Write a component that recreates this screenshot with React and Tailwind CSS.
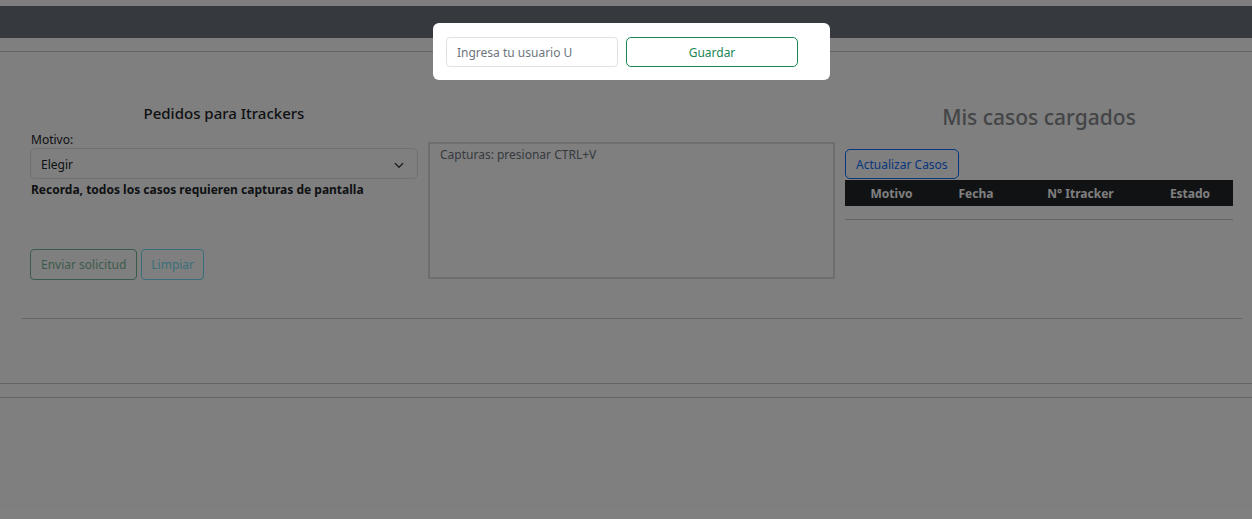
import React from "react";

function App() {
  return (
    <div
      className="relative min-h-[519px] bg-white text-[#212529] overflow-hidden"
      style={{ fontFamily: '"Noto Sans", "Open Sans", sans-serif' }}
    >
      {/* NAVBAR */}
      <div className="pt-[6px]">
        <nav className="h-[32px] bg-[#6c757d]" />
      </div>
      <div className="mt-[13px] border-t border-[#c9c9c9]" />

      {/* COLUMNS */}
      <div className="flex gap-[10px] pl-[30px]">
        {/* LEFT */}
        <div className="w-[388px] flex flex-col">
          <h2 className="mt-[49px] pt-[1px] text-center text-[15px] leading-[23px] font-medium">
            Pedidos para Itrackers
          </h2>
          <label className="mt-[5px] pt-[1px] ml-[1px] text-[12px] leading-[17px]">Motivo:</label>
          <div className="h-[31px] pt-[2px] border border-[#dee2e6] rounded-[5px] flex items-center justify-between pl-[10px] pr-[12px] text-[12px]">
            <span>Elegir</span>
            <svg width="12" height="12" viewBox="0 0 16 16" fill="none" stroke="#343a40" strokeWidth="1.6" strokeLinecap="round" strokeLinejoin="round">
              <path d="M3 6l5 5 5-5" />
            </svg>
          </div>
          <p className="mt-[2px] ml-[1px] text-[12px] leading-[17px] font-bold">
            Recorda, todos los casos requieren capturas de pantalla
          </p>
          <div className="mt-[51px] flex gap-[4px]">
            <button className="h-[31px] pt-[1px] px-[10px] border border-[#198754] rounded-[4px] text-[12px] text-[#198754] opacity-60">
              Enviar solicitud
            </button>
            <button className="h-[31px] pt-[1px] px-[9px] border border-[#0dcaf0] rounded-[4px] text-[12px] text-[#0dcaf0] opacity-60">
              Limpiar
            </button>
          </div>
        </div>

        {/* MIDDLE */}
        <div className="w-[407px]">
          <div className="mt-[90px] h-[137px] border-2 border-[#dcdcdc] px-[10px] py-[2px] text-[12px] text-[#6c757d]">
            Capturas: presionar CTRL+V
          </div>
        </div>

        {/* RIGHT */}
        <div className="w-[388px] flex flex-col">
          <h3 className="mt-[51px] text-center text-[21px] leading-[29px] font-medium text-[#888b8e]">
            Mis casos cargados
          </h3>
          <div className="mt-[17px]">
            <button className="h-[30px] pt-[2px] px-[10px] border border-[#0d6efd] rounded-[5px] text-[12px] text-[#0d6efd]">
              Actualizar Casos
            </button>
          </div>
          <div className="mt-[1px] h-[26px] pt-[2px] bg-[#212529] text-white text-[12px] font-bold flex items-center">
            <div className="w-[93px] text-center">Motivo</div>
            <div className="w-[76px] text-center">Fecha</div>
            <div className="w-[133px] text-center">N° Itracker</div>
            <div className="w-[86px] text-center">Estado</div>
          </div>
          <div className="h-[14px] border-b border-[#c9c9c9]" />
        </div>
      </div>

      {/* FOOTER LINES */}
      <div className="ml-[22px] mr-[10px] mt-[38px] border-t border-[#c9c9c9]" />
      <div className="mt-[64px] h-[15px] border-y border-[#c9c9c9]" />

      {/* BACKDROP */}
      <div className="absolute inset-0 bg-black/50" />

      {/* MODAL */}
      <div className="absolute top-[23px] left-[433px] w-[397px] h-[57px] bg-white rounded-[6px] flex items-center gap-[8px] pl-[13px]">
        <input
          className="w-[172px] h-[30px] pt-[1px] border border-[#dee2e6] rounded-[4px] px-[10px] text-[12px] outline-none placeholder:text-[#6c757d]"
          placeholder="Ingresa tu usuario U"
        />
        <button className="w-[172px] h-[30px] pt-[2px] border border-[#198754] rounded-[5px] text-[12px] text-[#198754]">
          Guardar
        </button>
      </div>
    </div>
  );
}

export default App;
